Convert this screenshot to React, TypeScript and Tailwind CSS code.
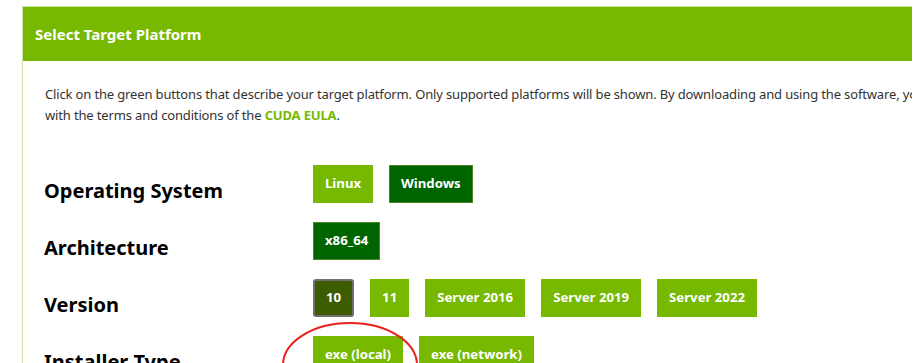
import React from 'react';

type Opt = { label: string; kind?: 'on' | 'focus' };

const rows: { title: string; options: Opt[] }[] = [
    { title: 'Operating System', options: [{ label: 'Linux' }, { label: 'Windows', kind: 'on' }] },
    { title: 'Architecture', options: [{ label: 'x86_64', kind: 'on' }] },
    {
        title: 'Version',
        options: [
            { label: '10', kind: 'focus' },
            { label: '11' },
            { label: 'Server 2016' },
            { label: 'Server 2019' },
            { label: 'Server 2022' },
        ],
    },
    { title: 'Installer Type', options: [{ label: 'exe (local)' }, { label: 'exe (network)' }] },
];

const OptionButton: React.FC<{ opt: Opt }> = ({ opt }) => {
    // selected = dark green, focused = olive with grey ring, default = nvidia green
    let cls = 'bg-[#76b900] border border-[#76b900]';
    if (opt.kind === 'on') cls = 'bg-[#006400] border border-[#4c8a1c]';
    if (opt.kind === 'focus') cls = 'bg-[#3d5c00] border-2 border-[#707070] rounded-[3px]';
    return (
        <button className={`h-[38px] px-[11px] text-[13.2px] font-bold text-white whitespace-nowrap ${cls}`}>
            {opt.label}
        </button>
    );
};

export default function App() {
    return (
        <div
            className="relative h-[363px] w-[920px] overflow-hidden bg-white"
            style={{ fontFamily: '"Noto Sans", "Open Sans", Arial, sans-serif' }}
        >
            <div className="ml-[22px] mt-[6px] w-[890px] overflow-hidden border-l border-t border-[#cfe3a6]">
                <div className="flex h-[54px] items-center bg-[#76b900] pl-[12px] text-[15px] font-bold text-white">
                    Select Target Platform
                </div>

                <div className="w-[1000px] pl-[22px] pt-[23px] text-[13px] leading-[21px] tracking-[-0.15px] text-[#333]">
                    <p className="whitespace-nowrap">
                        Click on the green buttons that describe your target platform. Only supported platforms will be
                        shown. By downloading and using the software, you agree to fully comply
                    </p>
                    <p>
                        with the terms and conditions of the{' '}
                        <a className="font-bold text-[#76b900]">CUDA EULA</a>.
                    </p>
                </div>

                <div className="mt-[39px] flex flex-col gap-[18px] pl-[21px]">
                    {rows.map((row) => (
                        <div key={row.title} className="flex">
                            <div className="mt-[13px] w-[269px] text-[20px] font-bold leading-[26px] text-black">
                                {row.title}
                            </div>
                            <div className="flex gap-[16px]">
                                {row.options.map((o) => (
                                    <OptionButton key={o.label} opt={o} />
                                ))}
                            </div>
                        </div>
                    ))}
                </div>
            </div>

            <svg className="absolute left-[280px] top-[320px]" width="140" height="60" viewBox="0 0 140 60">
                <ellipse cx="70" cy="45" rx="67" ry="42" fill="none" stroke="#e8221b" strokeWidth="2" />
            </svg>
        </div>
    );
}
